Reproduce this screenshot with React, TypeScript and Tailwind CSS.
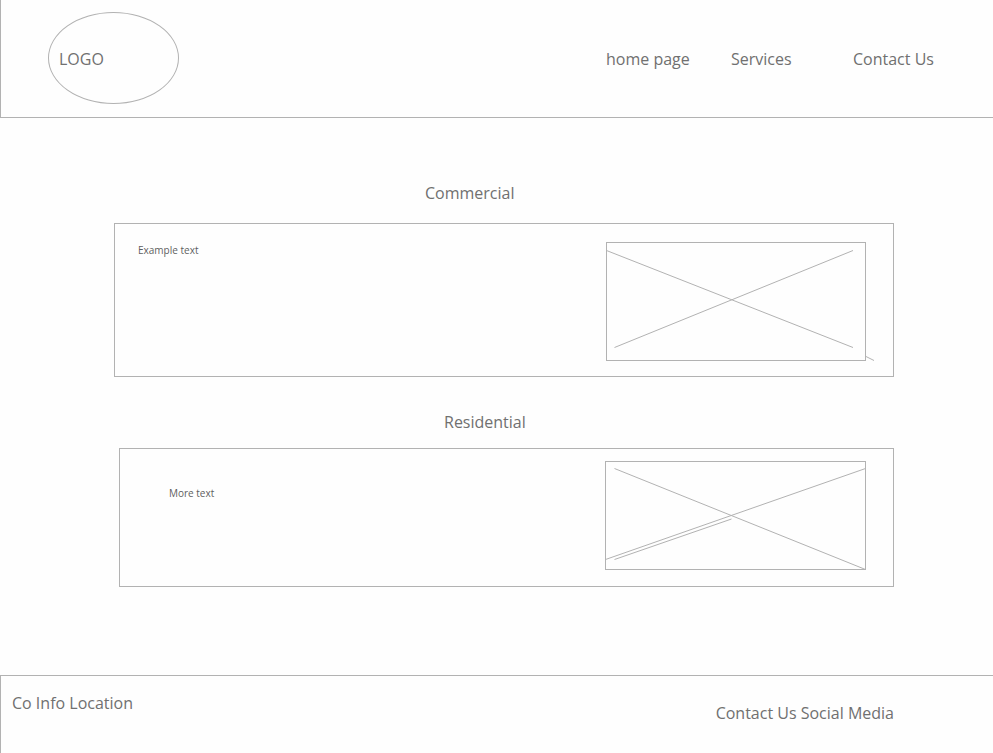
import type { ReactNode } from "react";

function Heading({ className, children }: { className: string; children: ReactNode }) {
  return <h2 className={`text-[16px] leading-6 font-normal ${className}`}>{children}</h2>;
}

function CommercialPicture() {
  return (
    <svg
      role="img"
      aria-label="Commercial picture placeholder"
      viewBox="0 0 260 119"
      className="h-[119px] w-[260px] shrink-0 overflow-visible"
      fill="none"
      stroke="#b2b2b2"
    >
      <rect x="0.5" y="0.5" width="259" height="118" />
      <path d="M0.5 8.5L247 105.5M8.5 105.5L247 8.5M260 114.5L268 118.5" />
    </svg>
  );
}

function ResidentialPicture() {
  return (
    <svg
      role="img"
      aria-label="Residential picture placeholder"
      viewBox="0 0 261 110"
      className="h-[110px] w-[261px] shrink-0"
      fill="none"
      stroke="#b2b2b2"
    >
      <rect x="0.5" y="0.5" width="260" height="108" />
      <path d="M9.5 7.5L260.5 108.5M0.5 98.5L260.5 7.5M9.5 98.5L126.5 58" />
    </svg>
  );
}

export default function App() {
  return (
    <div className="flex min-h-screen flex-col bg-[#fefefe] font-['Open_Sans','Noto_Sans',sans-serif] text-[16px] leading-6 font-normal text-[#707070]">
      <header className="flex h-[118px] items-center justify-between border-b border-l border-[#b2b2b2] pr-[60px] pl-[47px]">
        <a
          href="#home"
          className="mb-[2px] flex h-[92px] w-[131px] items-center rounded-[50%] border border-[#b2b2b2] pt-[2px] pl-[10px]"
        >
          LOGO
        </a>
        <nav className="flex whitespace-nowrap">
          <a href="#home" className="w-[125px]">home page</a>
          <a href="#services" className="w-[122px]">Services</a>
          <a href="#contact" className="w-20">Contact Us</a>
        </nav>
      </header>

      <main className="grow pt-[63px] pr-[99px] pb-[88px] pl-[114px]">
        <section>
          <Heading className="pl-[311px]">Commercial</Heading>
          <div className="mt-[18px] flex justify-between border border-[#b2b2b2] pt-[18px] pr-[27px] pb-[15px] pl-[23px]">
            <p className="text-[10px] leading-4 text-[#5e5e5e]">Example text</p>
            <CommercialPicture />
          </div>
        </section>

        <section className="mt-[33px] pl-[5px]">
          <Heading className="pl-[325px]">Residential</Heading>
          <div className="mt-[14px] flex justify-between border border-[#b2b2b2] pt-[12px] pr-[27px] pb-[15px] pl-[49px]">
            <p className="pt-6 text-[10px] leading-4 text-[#5e5e5e]">More text</p>
            <ResidentialPicture />
          </div>
        </section>
      </main>

      <footer className="flex h-[78px] justify-between border-t border-l border-[#b2b2b2] pt-[15px] pr-[99px] pl-[11px]">
        <p>Co Info Location</p>
        <a href="#contact" className="self-start pt-[10px]">Contact Us Social Media</a>
      </footer>
    </div>
  );
}
